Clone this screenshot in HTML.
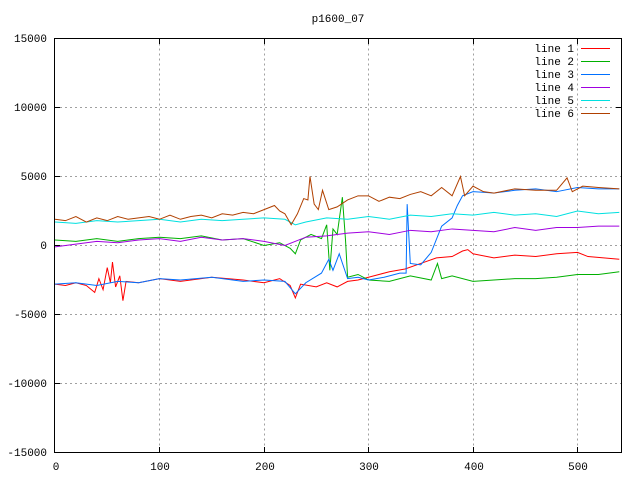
<!DOCTYPE html>
<html><head><meta charset="utf-8"><style>
html,body{margin:0;padding:0;background:#fff;}
svg{display:block;font-family:"Liberation Mono","DejaVu Sans Mono",monospace;}
</style></head><body>
<svg width="640" height="480" viewBox="0 0 640 480" xmlns="http://www.w3.org/2000/svg">
<rect width="640" height="480" fill="#fff"/>
<text x="338" y="22" font-size="11" text-anchor="middle">p1600_07</text>
<g stroke="#a0a0a0" stroke-dasharray="2,3" stroke-width="1">
<line x1="55" y1="107.5" x2="621" y2="107.5"/><line x1="55" y1="176.5" x2="621" y2="176.5"/>
<line x1="55" y1="245.5" x2="621" y2="245.5"/><line x1="55" y1="314.5" x2="621" y2="314.5"/>
<line x1="55" y1="383.5" x2="621" y2="383.5"/>
<line x1="159.5" y1="38.5" x2="159.5" y2="452.5"/><line x1="264.5" y1="38.5" x2="264.5" y2="452.5"/>
<line x1="368.5" y1="38.5" x2="368.5" y2="452.5"/><line x1="473.5" y1="38.5" x2="473.5" y2="452.5"/>
<line x1="577.5" y1="38.5" x2="577.5" y2="452.5"/>
</g>
<g font-size="11" text-anchor="end">
<text x="47" y="42">15000</text><text x="47" y="111">10000</text><text x="47" y="180">5000</text>
<text x="47" y="249">0</text><text x="47" y="318">-5000</text><text x="47" y="387">-10000</text><text x="47" y="456">-15000</text>
</g>
<g font-size="11" text-anchor="middle">
<text x="56" y="470">0</text><text x="160" y="470">100</text><text x="265" y="470">200</text>
<text x="369" y="470">300</text><text x="474" y="470">400</text><text x="578" y="470">500</text>
</g>
<g transform="translate(55,245.5) scale(1.045,-0.0138)" fill="none" stroke-width="1">
<polyline vector-effect="non-scaling-stroke" stroke="#ff0000" points="0,-2800 10,-2900 20,-2700 30,-2900 38,-3400 42,-2400 46,-3200 50,-1600 53,-2700 55,-1200 58,-3000 62,-2200 65,-4000 68,-2600 80,-2700 100,-2400 120,-2600 150,-2300 180,-2500 200,-2700 215,-2400 225,-2900 230,-3800 235,-2800 250,-3000 260,-2700 270,-3000 280,-2600 290,-2500 300,-2300 310,-2100 320,-1900 335,-1700 350,-1300 365,-900 380,-800 390,-400 395,-300 400,-600 420,-900 440,-700 460,-800 480,-600 500,-500 510,-800 525,-900 540,-1000"/>
<polyline vector-effect="non-scaling-stroke" stroke="#00b000" points="0,400 20,300 40,500 60,300 80,500 100,600 120,500 140,700 160,400 180,500 200,0 215,200 225,-200 230,-600 235,400 245,800 255,500 260,1500 263,-1800 266,1200 270,800 275,3500 278,400 280,-2300 290,-2100 300,-2500 320,-2600 340,-2200 360,-2500 366,-1300 370,-2400 380,-2200 400,-2600 420,-2500 440,-2400 460,-2400 480,-2300 500,-2100 520,-2100 540,-1900"/>
<polyline vector-effect="non-scaling-stroke" stroke="#0070ff" points="0,-2800 20,-2700 40,-2900 60,-2600 80,-2700 100,-2400 120,-2500 150,-2300 180,-2600 200,-2500 220,-2600 230,-3500 240,-2700 255,-2000 262,-1000 266,-1800 272,-600 280,-2400 290,-2300 300,-2500 315,-2300 330,-2000 336,-2000 337,3000 340,-1300 350,-1400 360,-500 370,1400 380,2000 385,2900 390,3600 400,3900 420,3800 440,4000 460,4100 480,3900 500,4200 520,4100 540,4100"/>
<polyline vector-effect="non-scaling-stroke" stroke="#a000e0" points="0,-100 20,100 40,300 60,200 80,400 100,500 120,300 140,600 160,400 180,500 200,300 220,0 240,600 260,700 280,900 300,1000 320,800 340,1100 360,1000 380,1200 400,1100 420,1000 440,1300 460,1100 480,1300 500,1300 520,1400 540,1400"/>
<polyline vector-effect="non-scaling-stroke" stroke="#00e0e0" points="0,1700 20,1600 40,1800 60,1700 80,1800 100,1900 120,1700 140,1900 160,1800 180,1900 200,2000 220,1900 230,1500 240,1700 260,2000 280,1900 300,2100 320,1900 340,2200 360,2100 380,2300 400,2200 420,2400 440,2200 460,2300 480,2100 500,2500 520,2300 540,2400"/>
<polyline vector-effect="non-scaling-stroke" stroke="#b04000" points="0,1900 10,1800 20,2100 30,1700 40,2000 50,1800 60,2100 70,1900 80,2000 90,2100 100,1900 110,2200 120,1900 130,2100 140,2200 150,2000 160,2300 170,2200 180,2400 190,2300 200,2600 210,2900 215,2500 220,2300 226,1500 232,2300 238,3400 242,3300 244,5000 248,3000 252,2600 256,4000 262,2600 270,2800 280,3300 290,3600 300,3600 310,3200 320,3500 330,3400 340,3700 350,3900 360,3600 370,4200 380,3600 388,5000 392,3600 400,4300 410,3900 420,3800 440,4100 460,4000 480,4000 490,4900 495,3900 505,4300 520,4200 540,4100"/>
</g>
<rect x="54.5" y="38.5" width="567" height="414" fill="none" stroke="#000" stroke-width="1"/>
<g stroke="#000"><line x1="55" y1="107.5" x2="60" y2="107.5"/><line x1="55" y1="176.5" x2="60" y2="176.5"/><line x1="55" y1="245.5" x2="60" y2="245.5"/><line x1="55" y1="314.5" x2="60" y2="314.5"/><line x1="55" y1="383.5" x2="60" y2="383.5"/>
<line x1="159.5" y1="452" x2="159.5" y2="447"/><line x1="264.5" y1="452" x2="264.5" y2="447"/><line x1="368.5" y1="452" x2="368.5" y2="447"/><line x1="473.5" y1="452" x2="473.5" y2="447"/><line x1="577.5" y1="452" x2="577.5" y2="447"/>
<line x1="159.5" y1="39" x2="159.5" y2="44"/><line x1="264.5" y1="39" x2="264.5" y2="44"/><line x1="368.5" y1="39" x2="368.5" y2="44"/><line x1="473.5" y1="39" x2="473.5" y2="44"/><line x1="577.5" y1="39" x2="577.5" y2="44"/>
<line x1="621" y1="107.5" x2="616" y2="107.5"/></g>
<g font-size="11" text-anchor="end">
<text x="574" y="52">line 1</text><text x="574" y="65">line 2</text><text x="574" y="78">line 3</text>
<text x="574" y="91">line 4</text><text x="574" y="104">line 5</text><text x="574" y="117">line 6</text>
</g>
<g stroke-width="1">
<line x1="581" y1="48.5" x2="610" y2="48.5" stroke="#ff0000"/><line x1="581" y1="61.5" x2="610" y2="61.5" stroke="#00b000"/>
<line x1="581" y1="74.5" x2="610" y2="74.5" stroke="#0070ff"/><line x1="581" y1="87.5" x2="610" y2="87.5" stroke="#a000e0"/>
<line x1="581" y1="100.5" x2="610" y2="100.5" stroke="#00e0e0"/><line x1="581" y1="113.5" x2="610" y2="113.5" stroke="#b04000"/>
</g>
</svg>
</body></html>
